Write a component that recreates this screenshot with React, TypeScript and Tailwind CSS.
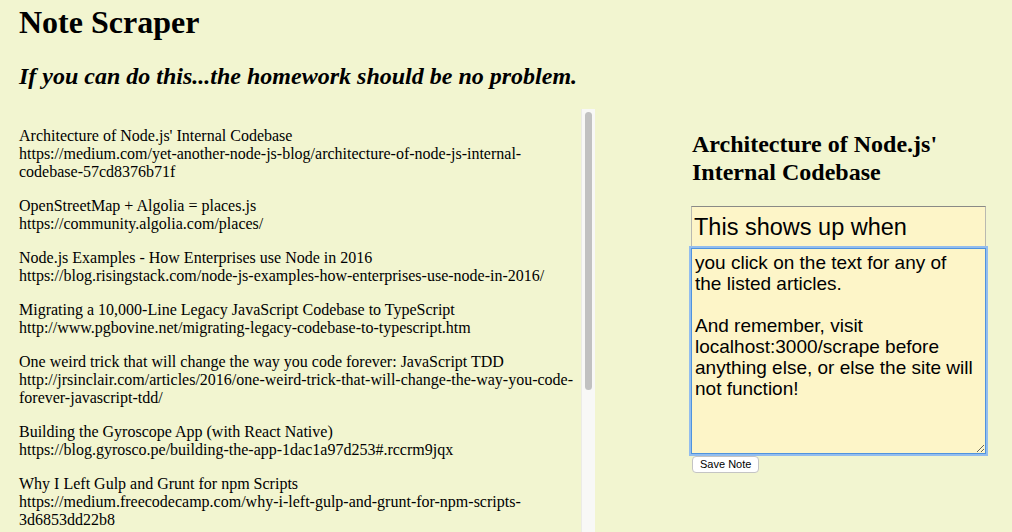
const articles = [
  { title: "Architecture of Node.js' Internal Codebase", link: ['https://medium.com/yet-another-node-js-blog/architecture-of-node-js-internal-', 'codebase-57cd8376b71f'] },
  { title: 'OpenStreetMap + Algolia = places.js', link: ['https://community.algolia.com/places/'] },
  { title: 'Node.js Examples - How Enterprises use Node in 2016', link: ['https://blog.risingstack.com/node-js-examples-how-enterprises-use-node-in-2016/'] },
  { title: 'Migrating a 10,000-Line Legacy JavaScript Codebase to TypeScript', link: ['http://www.pgbovine.net/migrating-legacy-codebase-to-typescript.htm'] },
  { title: 'One weird trick that will change the way you code forever: JavaScript TDD', link: ['http://jrsinclair.com/articles/2016/one-weird-trick-that-will-change-the-way-you-code-', 'forever-javascript-tdd/'] },
  { title: 'Building the Gyroscope App (with React Native)', link: ['https://blog.gyrosco.pe/building-the-app-1dac1a97d253#.rccrm9jqx'] },
  { title: 'Why I Left Gulp and Grunt for npm Scripts', link: ['https://medium.freecodecamp.com/why-i-left-gulp-and-grunt-for-npm-scripts-', '3d6853dd22b8'] },
];

const noteBody = 'you click on the text for any of the listed articles.\n\nAnd remember, visit localhost:3000/scrape before anything else, or else the site will not function!';

export default function App() {
  return (
    <div className="h-[532px] overflow-hidden bg-[#f2f5d0] text-black font-['Liberation_Serif',serif]">
      <div className="pl-[19px]">
        <h1 className="text-[32px] font-bold leading-[37px] pt-[4px] mb-[21px]">Note Scraper</h1>
        <h2 className="text-[24px] font-bold italic leading-[28px] mb-[19px]">If you can do this...the homework should be no problem.</h2>
      </div>

      <div className="flex">
        {/* article list with its scrollbar */}
        <div className="flex w-[595px] h-[424px]">
          <div className="flex-1 overflow-hidden pl-[19px] pt-[2px] text-[16px] leading-[18px]">
            {articles.map((a) => (
              <p key={a.title} className="mt-[16px] cursor-pointer">
                {a.title}
                {a.link.map((l) => (
                  <span key={l}><br />{l}</span>
                ))}
              </p>
            ))}
          </div>
          <div className="w-[14px] bg-[#f8f8f6] border-l border-[#ebebe6]">
            <div className="mt-[3px] ml-[3px] w-[7px] h-[278px] rounded-full bg-[#c1c1c1]" />
          </div>
        </div>

        {/* note editor */}
        <div className="ml-[96px] w-[295px] flex flex-col items-start">
          <h2 className="text-[24px] font-bold leading-[28px] mt-[21px] mb-[20px] pl-[1px]">Architecture of Node.js' Internal Codebase</h2>
          <input
            className="w-full h-[42px] px-[2px] bg-[#fdf5c8] border border-[#b9b9b0] border-t-[#8a8a86] border-b-0 text-[23.5px] font-['Liberation_Sans',sans-serif] outline-none"
            defaultValue="This shows up when"
          />
          <textarea
            className="w-full h-[206px] pl-[3px] pr-[10px] pt-[3px] bg-[#fdf5c8] border border-[#4f93de] shadow-[0_0_0_2px_#93bdee] text-[19px] leading-[21px] font-['Liberation_Sans',sans-serif] outline-none"
            defaultValue={noteBody}
          />
          <button className="mt-[2px] ml-[1px] h-[17px] px-[7px] bg-white border border-[#c4c4c4] rounded-[4px] text-[11px] leading-none font-['Liberation_Sans',sans-serif]">
            Save Note
          </button>
        </div>
      </div>
    </div>
  );
}
